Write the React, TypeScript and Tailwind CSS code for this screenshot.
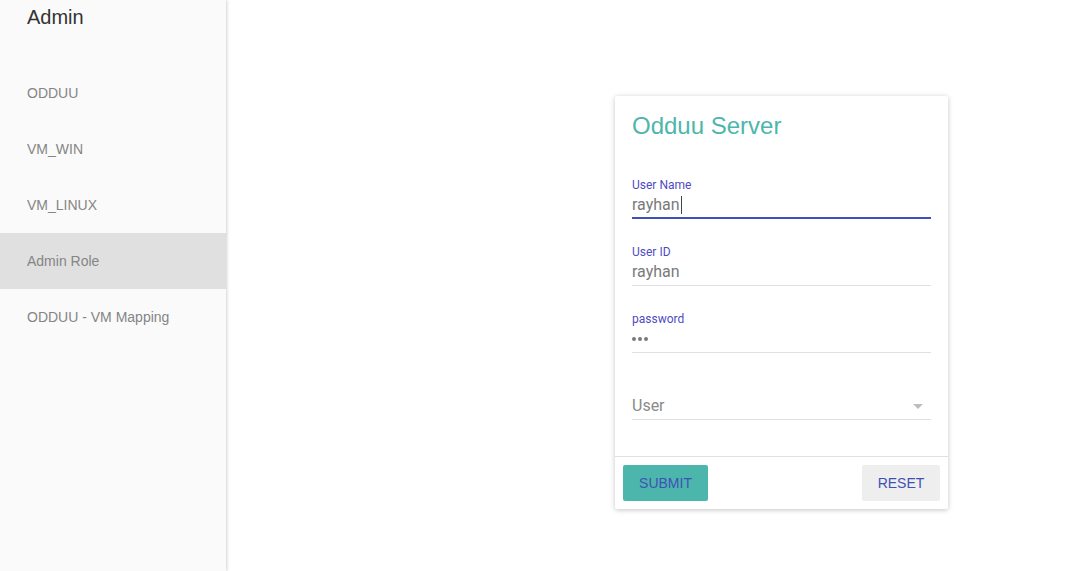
import React from 'react';

const menu = ['ODDUU', 'VM_WIN', 'VM_LINUX', 'Admin Role', 'ODDUU - VM Mapping'];

function Field({
  label,
  value,
  focused,
  password,
}: {
  label: string;
  value: string;
  focused?: boolean;
  password?: boolean;
}) {
  return (
    <div className="flex h-[67px] flex-col pt-[25px]">
      <div className="h-4 font-['Roboto',sans-serif] text-[12px] leading-4 text-[#4f4bc2]">{label}</div>
      <div className="flex h-6 items-center font-['Roboto',sans-serif] text-[16px] leading-6 text-[#7a7a7a]">
        {password ? (
          <span className="flex gap-[2px]">
            <span className="h-[4px] w-[4px] rounded-full bg-[#7a7a7a]" />
            <span className="h-[4px] w-[4px] rounded-full bg-[#7a7a7a]" />
            <span className="h-[4px] w-[4px] rounded-full bg-[#7a7a7a]" />
          </span>
        ) : (
          <span>{value}</span>
        )}
        {focused && <span className="ml-px h-[18px] w-px bg-[#444]" />}
      </div>
      {focused ? (
        <div className="h-[2px] bg-[#3f51b5]" />
      ) : (
        <div className="mt-px h-px bg-[#e0e0e0]" />
      )}
    </div>
  );
}

export default function App() {
  return (
    <div className="flex min-h-screen bg-white font-['Liberation_Sans',Arial,sans-serif]">
      <aside className="z-10 w-[226px] shrink-0 bg-[#fafafa] shadow-[1px_0_3px_rgba(0,0,0,0.18)]">
        <div className="h-[65px] pl-[27px] pt-[5px] text-[20px] leading-6 text-[#333]">Admin</div>
        <nav>
          {menu.map((item) => (
            <div
              key={item}
              className={`flex h-14 items-center pl-[27px] text-[14px] text-[#858585] ${
                item === 'Admin Role' ? 'bg-[#e0e0e0]' : ''
              }`}
            >
              {item}
            </div>
          ))}
        </nav>
      </aside>

      <main className="flex-1 pl-[389px] pt-[96px]">
        <div className="w-[333px] rounded-[2px] bg-white shadow-[0_1px_6px_rgba(0,0,0,0.12),0_1px_4px_rgba(0,0,0,0.12)]">
          <div className="px-[17px] pt-[14px]">
            <h1 className="mb-[10px] h-8 text-[24px] leading-8 text-[#4db6ac]">Odduu Server</h1>
            <Field label="User Name" value="rayhan" focused />
            <Field label="User ID" value="rayhan" />
            <Field label="password" value="" password />
            <div className="flex h-[67px] flex-col pt-[41px]">
              <div className="flex h-6 items-center justify-between font-['Roboto',sans-serif] text-[16px] leading-6 text-[#8a8a8a]">
                <span>User</span>
                <svg width="10" height="5" viewBox="0 0 10 5" className="mr-[8px]">
                  <path d="M0 0 L10 0 L5 5 Z" fill="#bdbdbd" />
                </svg>
              </div>
              <div className="mt-px h-px bg-[#e0e0e0]" />
            </div>
          </div>
          <div className="mt-9 flex justify-between border-t border-[#e0e0e0] p-2">
            <button
              type="button"
              className="h-9 w-[85px] rounded-[2px] bg-[#4db6ac] text-[14px] uppercase text-[#3f51b5]"
            >
              Submit
            </button>
            <button
              type="button"
              className="h-9 w-[78px] rounded-[2px] bg-[#eeeeee] text-[14px] uppercase text-[#3f51b5]"
            >
              Reset
            </button>
          </div>
        </div>
      </main>
    </div>
  );
}
